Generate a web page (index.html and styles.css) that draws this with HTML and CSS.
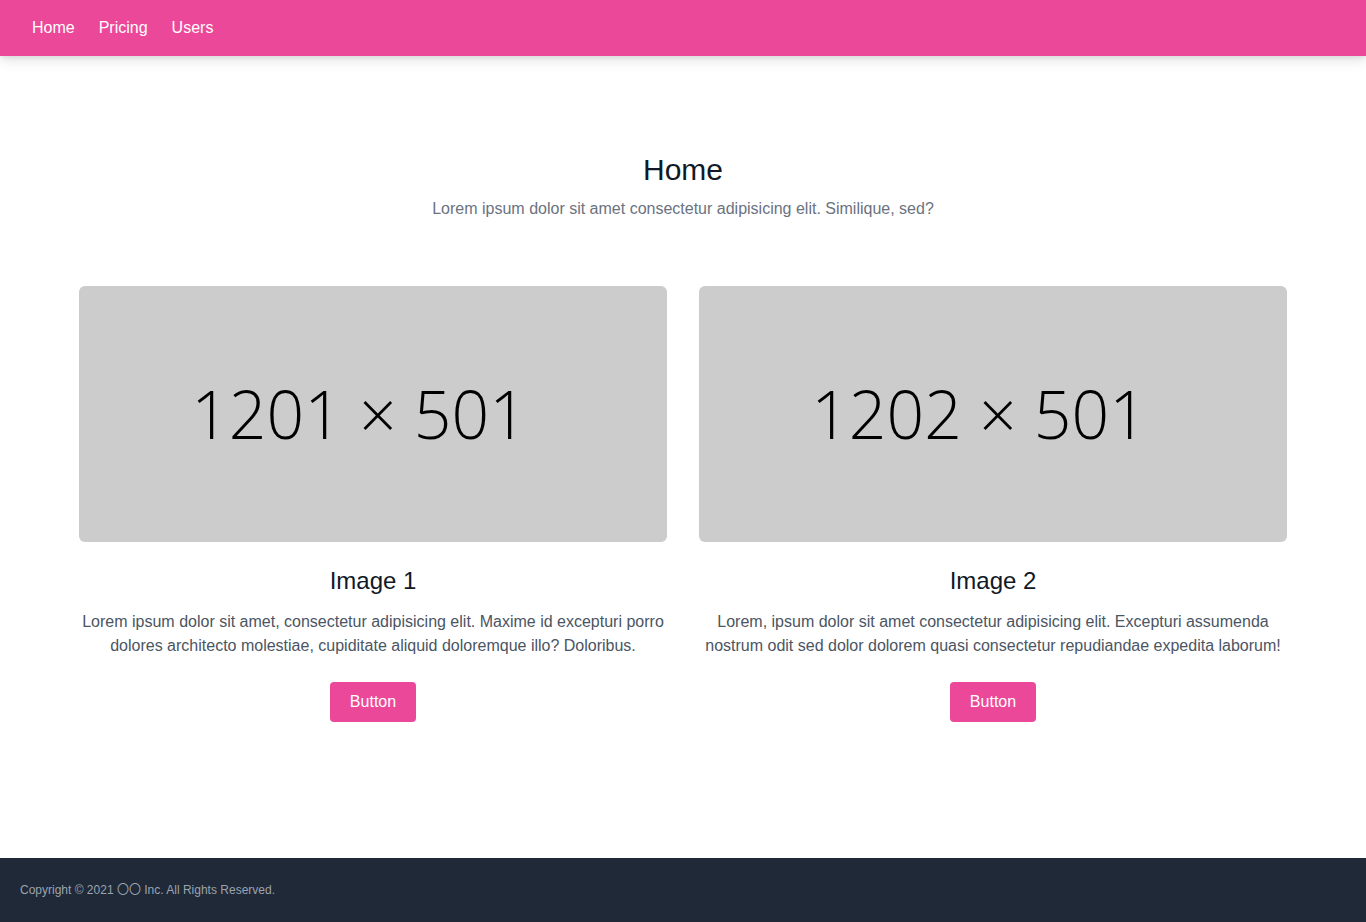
FILE: index.html
```html
<!DOCTYPE html>
<html lang="en">
<head>
<meta charset="utf-8">
<title>Home</title>
<link rel="stylesheet" href="styles.css">
</head>
<body>
<nav class="navbar">
  <a class="nav-link" href="#">Home</a>
  <a class="nav-link" href="#">Pricing</a>
  <a class="nav-link" href="#">Users</a>
</nav>
<main class="main">
  <header class="intro">
    <h1 class="intro-title">Home</h1>
    <p class="intro-text">Lorem ipsum dolor sit amet consectetur adipisicing elit. Similique, sed?</p>
  </header>
  <section class="cards">
    <article class="card">
      <div class="card-image"><span class="card-image-text">1201 × 501</span></div>
      <h2 class="card-title">Image 1</h2>
      <p class="card-text">Lorem ipsum dolor sit amet, consectetur adipisicing elit. Maxime id excepturi porro dolores architecto molestiae, cupiditate aliquid doloremque illo? Doloribus.</p>
      <button class="btn">Button</button>
    </article>
    <article class="card">
      <div class="card-image"><span class="card-image-text">1202 × 501</span></div>
      <h2 class="card-title">Image 2</h2>
      <p class="card-text">Lorem, ipsum dolor sit amet consectetur adipisicing elit. Excepturi assumenda nostrum odit sed dolor dolorem quasi consectetur repudiandae expedita laborum!</p>
      <button class="btn">Button</button>
    </article>
  </section>
</main>
<footer class="footer">
  <p class="footer-text">Copyright © 2021 <span class="cjk">〇〇</span> Inc. All Rights Reserved.</p>
</footer>
</body>
</html>
```
FILE: styles.css
```css
* { box-sizing: border-box; }
html, body { margin: 0; padding: 0; }
body {
  font-family: "Liberation Sans", Arial, sans-serif;
  min-height: 100vh;
  display: flex;
  flex-direction: column;
  background: #ffffff;
  color: #111827;
}
.navbar {
  height: 56px;
  background: #ec4899;
  display: flex;
  align-items: center;
  gap: 24px;
  padding: 0 32px;
  box-shadow: 0 4px 12px rgba(0,0,0,0.12), 0 2px 4px rgba(0,0,0,0.06);
  position: relative;
  z-index: 1;
}
.nav-link {
  color: #ffffff;
  text-decoration: none;
  font-size: 16px;
  line-height: 24px;
}
.main {
  flex: 1;
  padding-top: 96px;
}
.intro {
  text-align: center;
  margin-bottom: 65px;
}
.intro-title {
  margin: 0;
  font-size: 30px;
  line-height: 36px;
  font-weight: 400;
  color: #111827;
}
.intro-text {
  margin: 9px 0 0;
  font-size: 16px;
  line-height: 24px;
  color: #6b7280;
}
.cards {
  width: 1208px;
  margin: 0 auto;
  display: grid;
  grid-template-columns: 1fr 1fr;
  gap: 32px;
}
.card {
  display: flex;
  flex-direction: column;
  align-items: center;
  text-align: center;
}
.card-image {
  width: 100%;
  height: 256px;
  background: #cccccc;
  border-radius: 6px;
  display: flex;
  align-items: center;
  justify-content: center;
  padding-right: 28px;
  padding-bottom: 3px;
}
.card-image-text {
  font-family: "Open Sans", sans-serif;
  font-weight: 300;
  font-size: 66px;
  color: #000000;
  white-space: nowrap;
}
.card-title {
  margin: 23px 0 0;
  font-size: 24px;
  line-height: 32px;
  font-weight: 400;
  color: #111827;
}
.card-text {
  margin: 13px 0 0;
  font-size: 16px;
  line-height: 24px;
  color: #4b5563;
}
.btn {
  margin-top: 24px;
  background: #ec4899;
  color: #ffffff;
  border: none;
  border-radius: 4px;
  font-family: inherit;
  font-size: 16px;
  line-height: 24px;
  padding: 8px 20px;
  cursor: pointer;
}
.footer {
  height: 64px;
  background: #1f2937;
  padding: 23px 20px;
}
.footer-text {
  margin: 0;
  font-size: 12px;
  line-height: 16px;
  color: #9ca3af;
}
.cjk {
  font-family: "Noto Sans CJK JP", "Noto Sans CJK SC", sans-serif;
}
```
